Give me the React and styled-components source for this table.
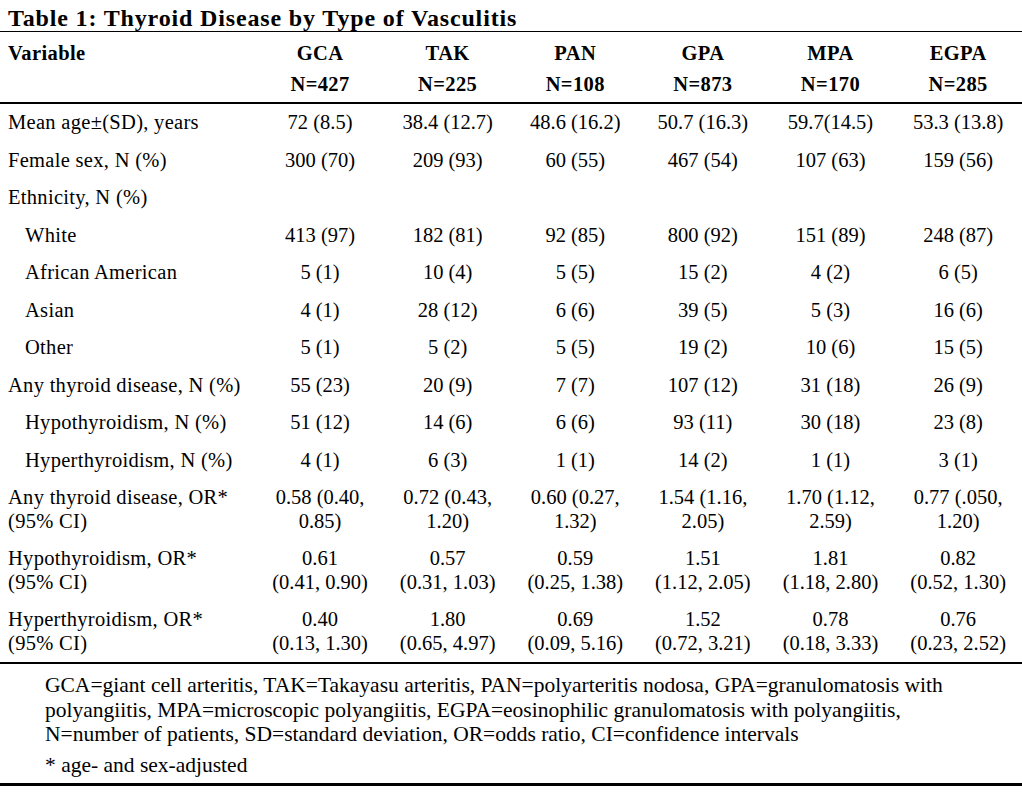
import React from "react";
import styled, { createGlobalStyle } from "styled-components";

const Global = createGlobalStyle`
  html, body { margin: 0; padding: 0; background: #fff; }
  body { font-family: "Liberation Serif", "Times New Roman", serif; color: #000; }
`;

const Page = styled.div`
  width: 1022px;
  height: 793px;
  background: #fff;
  overflow: hidden;
`;

const Title = styled.h1`
  margin: 0;
  padding: 4px 0 0 8px;
  height: 32px;
  box-sizing: border-box;
  font-size: 24px;
  line-height: 28px;
  font-weight: 700;
  letter-spacing: 0.85px;
  border-bottom: 1.5px solid #000;
`;

const Table = styled.table`
  width: 1022px;
  border-collapse: collapse;
  table-layout: fixed;
  font-size: 20.5px;
`;

const HeadCell = styled.th`
  font-weight: 700;
  text-align: ${(p) => (p.$left ? "left" : "center")};
  padding: ${(p) => (p.$left ? "6px 0 2px 8px" : "6px 0 2px 0")};
  line-height: 31px;
  vertical-align: top;
  border-bottom: 2px solid #000;
  letter-spacing: 0.4px;
`;

const Row = styled.tr``;

const LabelCell = styled.td`
  text-align: left;
  padding: 7px 0 7px ${(p) => (p.$indent ? "25px" : "8px")};
  line-height: 23.5px;
  vertical-align: top;
  white-space: nowrap;
  letter-spacing: 0.3px;
`;

const ValueCell = styled.td`
  text-align: center;
  padding: 7px 0;
  line-height: 23.5px;
  vertical-align: top;
  white-space: nowrap;
`;

const Footer = styled.div`
  border-top: 2px solid #000;
  border-bottom: 3px solid #000;
  padding: 9px 0 5px 45px;
  font-size: 21.5px;
  line-height: 24.5px;
`;

const Note = styled.p`
  margin: ${(p) => (p.$gap ? "6.5px 0 0" : "0")};
`;

const cols = [
  ["GCA", "N=427"],
  ["TAK", "N=225"],
  ["PAN", "N=108"],
  ["GPA", "N=873"],
  ["MPA", "N=170"],
  ["EGPA", "N=285"],
];

const rows = [
  { label: "Mean age±(SD), years", values: ["72 (8.5)", "38.4 (12.7)", "48.6 (16.2)", "50.7 (16.3)", "59.7(14.5)", "53.3 (13.8)"] },
  { label: "Female sex, N (%)", values: ["300 (70)", "209 (93)", "60 (55)", "467 (54)", "107 (63)", "159 (56)"] },
  { label: "Ethnicity, N (%)", values: ["", "", "", "", "", ""] },
  { label: "White", indent: true, values: ["413 (97)", "182 (81)", "92 (85)", "800 (92)", "151 (89)", "248 (87)"] },
  { label: "African American", indent: true, values: ["5 (1)", "10 (4)", "5 (5)", "15 (2)", "4 (2)", "6 (5)"] },
  { label: "Asian", indent: true, values: ["4 (1)", "28 (12)", "6 (6)", "39 (5)", "5 (3)", "16 (6)"] },
  { label: "Other", indent: true, values: ["5 (1)", "5 (2)", "5 (5)", "19 (2)", "10 (6)", "15 (5)"] },
  { label: "Any thyroid disease, N (%)", values: ["55 (23)", "20 (9)", "7 (7)", "107 (12)", "31 (18)", "26 (9)"] },
  { label: "Hypothyroidism, N (%)", indent: true, values: ["51 (12)", "14 (6)", "6 (6)", "93 (11)", "30 (18)", "23 (8)"] },
  { label: "Hyperthyroidism, N (%)", indent: true, values: ["4 (1)", "6 (3)", "1 (1)", "14 (2)", "1 (1)", "3 (1)"] },
  {
    label: ["Any thyroid disease, OR*", "(95% CI)"],
    values: [
      ["0.58 (0.40,", "0.85)"],
      ["0.72 (0.43,", "1.20)"],
      ["0.60 (0.27,", "1.32)"],
      ["1.54 (1.16,", "2.05)"],
      ["1.70 (1.12,", "2.59)"],
      ["0.77 (.050,", "1.20)"],
    ],
  },
  {
    label: ["Hypothyroidism, OR*", "(95% CI)"],
    values: [
      ["0.61", "(0.41, 0.90)"],
      ["0.57", "(0.31, 1.03)"],
      ["0.59", "(0.25, 1.38)"],
      ["1.51", "(1.12, 2.05)"],
      ["1.81", "(1.18, 2.80)"],
      ["0.82", "(0.52, 1.30)"],
    ],
  },
  {
    label: ["Hyperthyroidism, OR*", "(95% CI)"],
    values: [
      ["0.40", "(0.13, 1.30)"],
      ["1.80", "(0.65, 4.97)"],
      ["0.69", "(0.09, 5.16)"],
      ["1.52", "(0.72, 3.21)"],
      ["0.78", "(0.18, 3.33)"],
      ["0.76", "(0.23, 2.52)"],
    ],
  },
];

const Lines = ({ v }) =>
  Array.isArray(v)
    ? v.map((t, i) => (
        <React.Fragment key={i}>
          {i > 0 && <br />}
          {t}
        </React.Fragment>
      ))
    : v;

export default function App() {
  return (
    <Page>
      <Global />
      <Title>Table 1: Thyroid Disease by Type of Vasculitis</Title>
      <Table>
        <colgroup>
          <col style={{ width: "256px" }} />
          {cols.map((c) => (
            <col key={c[0]} style={{ width: "127.5px" }} />
          ))}
        </colgroup>
        <thead>
          <tr>
            <HeadCell $left>Variable</HeadCell>
            {cols.map((c) => (
              <HeadCell key={c[0]}>
                {c[0]}
                <br />
                {c[1]}
              </HeadCell>
            ))}
          </tr>
        </thead>
        <tbody>
          {rows.map((r, i) => (
            <Row key={i}>
              <LabelCell $indent={r.indent}>
                <Lines v={r.label} />
              </LabelCell>
              {r.values.map((v, j) => (
                <ValueCell key={j}>
                  <Lines v={v} />
                </ValueCell>
              ))}
            </Row>
          ))}
        </tbody>
      </Table>
      <Footer>
        <Note>
          GCA=giant cell arteritis, TAK=Takayasu arteritis, PAN=polyarteritis nodosa, GPA=granulomatosis with
          <br />
          polyangiitis, MPA=microscopic polyangiitis, EGPA=eosinophilic granulomatosis with polyangiitis,
          <br />
          N=number of patients, SD=standard deviation, OR=odds ratio, CI=confidence intervals
        </Note>
        <Note $gap>* age- and sex-adjusted</Note>
      </Footer>
    </Page>
  );
}
